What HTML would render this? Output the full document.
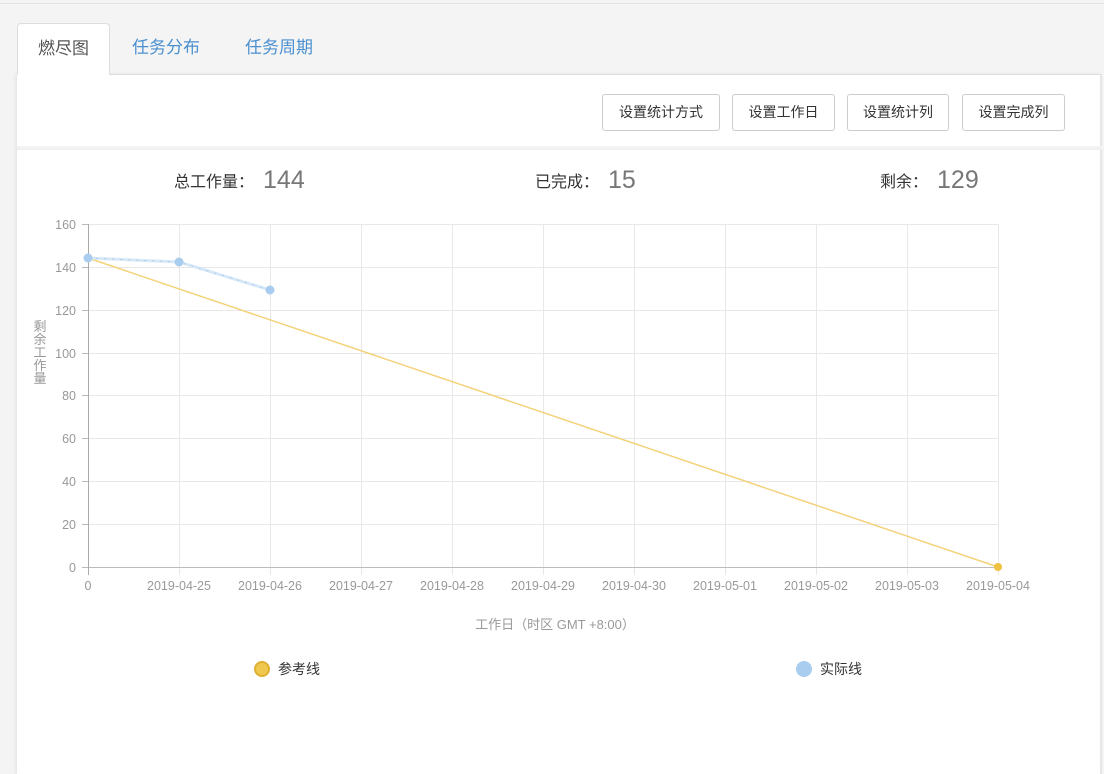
<!DOCTYPE html>
<html><head><meta charset="utf-8"><style>
*{margin:0;padding:0;box-sizing:border-box}
body{width:1104px;height:762px;overflow:hidden;background:#f4f4f4;font-family:"Liberation Sans","Noto Sans CJK SC",sans-serif;position:relative}
.topline{position:absolute;left:0;top:3px;width:1104px;height:1px;background:#e2e2e2}
.tab{position:absolute;top:23px;height:52px;font-size:17px;line-height:50px;color:#4a90d0}
.tab.active{left:17px;width:93px;background:#fff;border:1px solid #ddd;border-bottom:none;border-radius:4px 4px 0 0;color:#555;text-align:center;z-index:2}
.panel{position:absolute;left:17px;top:74px;width:1085px;height:700px;background:#fff;border-top:1px solid #ddd;border-right:2px solid #e6e6e6;box-shadow:-2px 0 3px #e6e6e6}
.sep{position:absolute;left:17px;top:146px;width:1085px;height:4px;background:linear-gradient(#f6f6f6,#eee)}
.btn{position:absolute;top:94px;height:37px;border:1px solid #ccc;border-radius:3px;background:#fff;font-size:14px;color:#333;text-align:center;line-height:35px}
.stat{position:absolute;top:166px;font-size:16px;color:#333}
.stat b{font-weight:normal;font-size:25px;color:#777;margin-left:9px;vertical-align:-1px}
svg{position:absolute;left:0;top:0}
</style></head><body>
<div class="topline"></div>
<div class="panel"></div>
<div class="tab active">燃尽图</div>
<div class="tab" style="left:132px">任务分布</div>
<div class="tab" style="left:245px">任务周期</div>
<div class="btn" style="left:602px;width:118px">设置统计方式</div>
<div class="btn" style="left:732px;width:103px">设置工作日</div>
<div class="btn" style="left:847px;width:102px">设置统计列</div>
<div class="btn" style="left:962px;width:103px">设置完成列</div>
<div class="sep"></div>
<div class="stat" style="left:174px">总工作量：<b>144</b></div>
<div class="stat" style="left:535px">已完成：<b>15</b></div>
<div class="stat" style="left:880px">剩余：<b>129</b></div>
<svg width="1104" height="762" font-family="Liberation Sans, Noto Sans CJK SC, sans-serif">
<g stroke="#e8e8e8" stroke-width="1">
<line x1="88" y1="224.5" x2="998" y2="224.5"/><line x1="88" y1="267.5" x2="998" y2="267.5"/><line x1="88" y1="310.5" x2="998" y2="310.5"/><line x1="88" y1="353.5" x2="998" y2="353.5"/><line x1="88" y1="395.5" x2="998" y2="395.5"/><line x1="88" y1="438.5" x2="998" y2="438.5"/><line x1="88" y1="481.5" x2="998" y2="481.5"/><line x1="88" y1="524.5" x2="998" y2="524.5"/>
<line x1="179.5" y1="224" x2="179.5" y2="575"/><line x1="270.5" y1="224" x2="270.5" y2="575"/><line x1="361.5" y1="224" x2="361.5" y2="575"/><line x1="452.5" y1="224" x2="452.5" y2="575"/><line x1="543.5" y1="224" x2="543.5" y2="575"/><line x1="634.5" y1="224" x2="634.5" y2="575"/><line x1="725.5" y1="224" x2="725.5" y2="575"/><line x1="816.5" y1="224" x2="816.5" y2="575"/><line x1="907.5" y1="224" x2="907.5" y2="575"/><line x1="998.5" y1="224" x2="998.5" y2="575"/>
</g>
<g stroke="#bbb"><line x1="88" y1="567.5" x2="998" y2="567.5"/>
<line x1="82" y1="224.5" x2="88" y2="224.5"/><line x1="82" y1="267.5" x2="88" y2="267.5"/><line x1="82" y1="310.5" x2="88" y2="310.5"/><line x1="82" y1="353.5" x2="88" y2="353.5"/><line x1="82" y1="395.5" x2="88" y2="395.5"/><line x1="82" y1="438.5" x2="88" y2="438.5"/><line x1="82" y1="481.5" x2="88" y2="481.5"/><line x1="82" y1="524.5" x2="88" y2="524.5"/><line x1="82" y1="567.5" x2="88" y2="567.5"/></g>
<line x1="88.5" y1="224" x2="88.5" y2="575" stroke="#aaa"/>
<g font-size="12.5" fill="#999" text-anchor="end">
<text x="76" y="229">160</text><text x="76" y="272">140</text><text x="76" y="315">120</text><text x="76" y="358">100</text><text x="76" y="400">80</text><text x="76" y="443">60</text><text x="76" y="486">40</text><text x="76" y="529">20</text><text x="76" y="572">0</text>
</g>
<g font-size="12.5" fill="#999" text-anchor="middle">
<text x="88" y="590">0</text><text x="179" y="590">2019-04-25</text><text x="270" y="590">2019-04-26</text><text x="361" y="590">2019-04-27</text><text x="452" y="590">2019-04-28</text><text x="543" y="590">2019-04-29</text><text x="634" y="590">2019-04-30</text><text x="725" y="590">2019-05-01</text><text x="816" y="590">2019-05-02</text><text x="907" y="590">2019-05-03</text><text x="998" y="590">2019-05-04</text>
<text x="555" y="629" font-size="13">工作日（时区 GMT +8:00）</text>
</g>
<g font-size="13" fill="#999" text-anchor="middle">
<text x="40" y="331">剩</text><text x="40" y="344">余</text><text x="40" y="357">工</text><text x="40" y="370">作</text><text x="40" y="383">量</text>
</g>
<line x1="88" y1="258" x2="998" y2="567" stroke="#f3d27a" stroke-width="1.5"/>
<polyline points="88,258 179,262 270,290" fill="none" stroke="#d6e8f7" stroke-width="3"/>
<polyline points="88,258 179,262 270,290" fill="none" stroke="#a9cdee" stroke-width="1" stroke-dasharray="2 6"/>
<circle cx="88" cy="258" r="4.5" fill="#a9cdee"/><circle cx="179" cy="262" r="4.5" fill="#a9cdee"/><circle cx="270" cy="290" r="4.5" fill="#a9cdee"/>
<circle cx="998" cy="567" r="4" fill="#f0c040"/>
<circle cx="262" cy="669" r="8" fill="#e0b030"/><circle cx="262" cy="669" r="6" fill="#f0c850"/>
<text x="278" y="674" font-size="14" fill="#333">参考线</text>
<circle cx="804" cy="669" r="8" fill="#a9cdee"/>
<text x="820" y="674" font-size="14" fill="#333">实际线</text>
</svg>
</body></html>
